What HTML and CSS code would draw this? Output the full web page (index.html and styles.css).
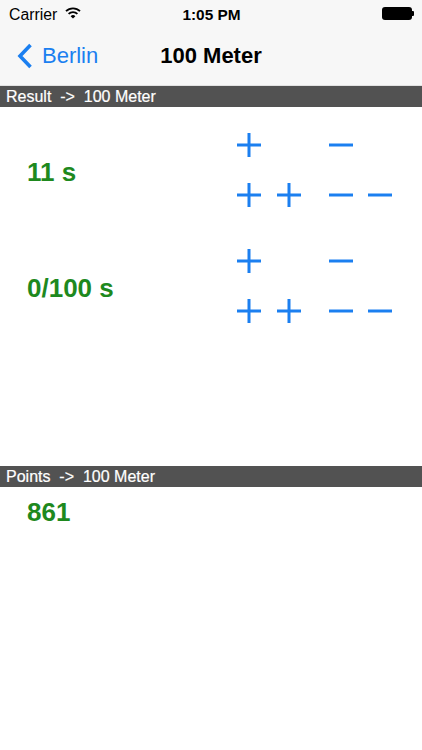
FILE: index.html
```html
<!DOCTYPE html>
<html lang="en">
<head>
    <meta charset="UTF-8">
    <meta name="viewport" content="width=device-width, initial-scale=1.0">
    <title>100 Meter</title>
    <link rel="stylesheet" href="styles.css">
</head>
<body>
    <div class="status-bar">
        <div class="status-left">
            <span>Carrier</span>
            <svg class="wifi" width="16" height="12" viewBox="0 0 16 12">
                <path d="M1 4.2 A10 10 0 0 1 15 4.2" fill="none" stroke="#000" stroke-width="1.8"/>
                <path d="M3.6 6.9 A6.3 6.3 0 0 1 12.4 6.9" fill="none" stroke="#000" stroke-width="1.8"/>
                <path d="M8 11.6 L5.6 9.2 A3.4 3.4 0 0 1 10.4 9.2 Z" fill="#000"/>
            </svg>
        </div>
        <div class="status-time">1:05 PM</div>
        <div class="status-right">
            <div class="battery"><div class="battery-nub"></div></div>
        </div>
    </div>

    <div class="nav-bar">
        <a class="back-btn" href="#">
            <svg width="16" height="26" viewBox="0 0 16 26">
                <path d="M13.5 2 L3 13 L13.5 24" fill="none" stroke="#1b7ff0" stroke-width="3.6"/>
            </svg>
            <span>Berlin</span>
        </a>
        <div class="nav-title">100 Meter</div>
        <div></div>
    </div>

    <div class="section-header">Result  -&gt;  100 Meter</div>
    <div class="result-body">
        <div class="calc-row">
            <div class="value">11 s</div>
            <div class="pad">
                <button class="step c1 r1"><svg width="24" height="24" viewBox="0 0 24 24"><path d="M12 0v24M0 12h24"/></svg></button>
                <button class="step c3 r1"><svg width="24" height="24" viewBox="0 0 24 24"><path d="M0 12h24"/></svg></button>
                <button class="step c1 r2"><svg width="24" height="24" viewBox="0 0 24 24"><path d="M12 0v24M0 12h24"/></svg></button>
                <button class="step c2 r2"><svg width="24" height="24" viewBox="0 0 24 24"><path d="M12 0v24M0 12h24"/></svg></button>
                <button class="step c3 r2"><svg width="24" height="24" viewBox="0 0 24 24"><path d="M0 12h24"/></svg></button>
                <button class="step c4 r2"><svg width="24" height="24" viewBox="0 0 24 24"><path d="M0 12h24"/></svg></button>
            </div>
        </div>
        <div class="calc-row">
            <div class="value">0/100 s</div>
            <div class="pad">
                <button class="step c1 r1"><svg width="24" height="24" viewBox="0 0 24 24"><path d="M12 0v24M0 12h24"/></svg></button>
                <button class="step c3 r1"><svg width="24" height="24" viewBox="0 0 24 24"><path d="M0 12h24"/></svg></button>
                <button class="step c1 r2"><svg width="24" height="24" viewBox="0 0 24 24"><path d="M12 0v24M0 12h24"/></svg></button>
                <button class="step c2 r2"><svg width="24" height="24" viewBox="0 0 24 24"><path d="M12 0v24M0 12h24"/></svg></button>
                <button class="step c3 r2"><svg width="24" height="24" viewBox="0 0 24 24"><path d="M0 12h24"/></svg></button>
                <button class="step c4 r2"><svg width="24" height="24" viewBox="0 0 24 24"><path d="M0 12h24"/></svg></button>
            </div>
        </div>
    </div>

    <div class="section-header">Points  -&gt;  100 Meter</div>
    <div class="points-body">
        <div class="value">861</div>
    </div>
</body>
</html>
```

FILE: styles.css
```css
body {
    margin: 0;
    font-family: "Liberation Sans", Arial, sans-serif;
    background-color: #fff;
    width: 422px;
    height: 750px;
    overflow: hidden;
}
.status-bar {
    height: 26px;
    display: grid;
    grid-template-columns: 1fr auto 1fr;
    align-items: center;
    padding: 0 8px 0 9px;
    background-color: #f7f7f7;
    font-size: 15.8px;
    color: #000;
}
.status-left {
    display: flex;
    align-items: center;
    gap: 8px;
    padding-top: 3px;
}
.wifi {
    margin-top: -4px;
}
.status-time {
    font-weight: bold;
    font-size: 15.4px;
    padding-top: 3px;
}
.status-right {
    display: flex;
    justify-content: flex-end;
}
.battery {
    position: relative;
    width: 30px;
    height: 13px;
    margin-right: 2px;
    background-color: #000;
    border-radius: 3px;
}
.battery-nub {
    position: absolute;
    right: -2px;
    top: 4px;
    width: 2px;
    height: 5px;
    background-color: #000;
    border-radius: 0 1px 1px 0;
}
.nav-bar {
    height: 59px;
    display: grid;
    grid-template-columns: 1fr auto 1fr;
    align-items: center;
    background-color: #f7f7f7;
    border-bottom: 1px solid #e2e2e2;
}
.back-btn {
    display: flex;
    align-items: center;
    gap: 9px;
    padding-left: 17px;
    color: #1b7ff0;
    text-decoration: none;
    font-size: 22px;
}
.nav-title {
    font-size: 22px;
    font-weight: bold;
    color: #000;
}
.section-header {
    height: 21px;
    line-height: 21px;
    padding-left: 6px;
    background-color: #525252;
    color: #fff;
    font-size: 16px;
    white-space: pre;
    -webkit-text-stroke: 0.2px #fff;
}
.result-body {
    height: 333px;
    padding-top: 26px;
}
.calc-row {
    display: flex;
    align-items: center;
    justify-content: space-between;
    padding: 0 30px 0 27px;
    height: 74px;
    margin-bottom: 42px;
}
.value {
    color: #1e891e;
    font-size: 26px;
    font-weight: bold;
    line-height: 30px;
    padding-top: 4px;
}
.pad {
    display: grid;
    grid-template-columns: 40px 52px 39px 24px;
    grid-template-rows: 24px 24px;
    row-gap: 26px;
}
.step {
    width: 24px;
    height: 24px;
    padding: 0;
    border: none;
    background: none;
    cursor: pointer;
}
.step svg {
    display: block;
    stroke: #1b7ff0;
    stroke-width: 3;
    fill: none;
}
.c1 { grid-column: 1; }
.c2 { grid-column: 2; }
.c3 { grid-column: 3; }
.c4 { grid-column: 4; }
.r1 { grid-row: 1; }
.r2 { grid-row: 2; }
.points-body {
    padding: 6px 0 0 27px;
}
```
